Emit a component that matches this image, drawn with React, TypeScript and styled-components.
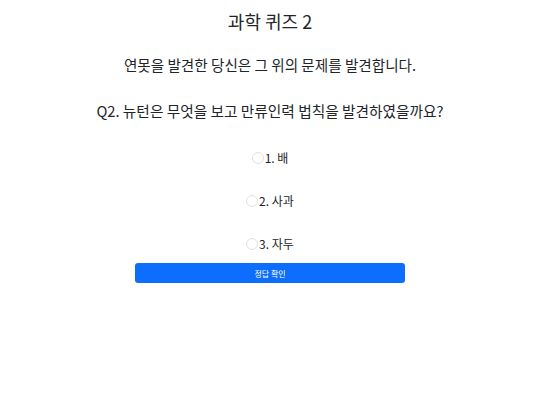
import styled, { createGlobalStyle } from "styled-components";

const GlobalStyle = createGlobalStyle`
    body {
        margin: 0;
        background: #fff;
        color: #212529;
        font-family: "Noto Sans CJK KR", "Noto Sans", sans-serif;
    }
`;

const Wrapper = styled.div`
    display: flex;
    flex-direction: column;
    align-items: center;
    padding-top: 8px;
`;

const Title = styled.h1`
    margin: 0;
    font-size: 18px;
    font-weight: 400;
    line-height: 26px;
`;

const Story = styled.p`
    margin: 20px 0 0;
    font-size: 14.6px;
    line-height: 22px;
`;

const Question = styled.h2`
    margin: 24px 0 0;
    font-size: 14.7px;
    font-weight: 400;
    line-height: 22px;
`;

const Options = styled.div`
    display: flex;
    flex-direction: column;
    align-items: center;
    gap: 23px;
    margin-top: 26px;
`;

const OptionLabel = styled.label`
    display: flex;
    align-items: center;
    font-size: 12px;
    line-height: 20px;
`;

const Radio = styled.input`
    appearance: none;
    width: 12px;
    height: 12px;
    margin: 0 1px 0 0;
    border: 1px solid #dee2e6;
    border-radius: 50%;
    background: #fff;
`;

const SubmitButton = styled.button`
    width: 270px;
    height: 20px;
    margin-top: 9px;
    border: none;
    border-radius: 3px;
    background: #0d6efd;
    color: #fff;
    font-family: inherit;
    font-size: 8px;
    padding: 0;
`;

const answers = ["1. 배", "2. 사과", "3. 자두"];

function App() {
    return (
        <Wrapper>
            <GlobalStyle />
            <Title>과학 퀴즈 2</Title>
            <Story>연못을 발견한 당신은 그 위의 문제를 발견합니다.</Story>
            <Question>Q2. 뉴턴은 무엇을 보고 만류인력 법칙을 발견하였을까요?</Question>
            <Options>
                {answers.map((a) => (
                    <OptionLabel key={a}>
                        <Radio type="radio" name="answer" />
                        {a}
                    </OptionLabel>
                ))}
            </Options>
            <SubmitButton>정답 확인</SubmitButton>
        </Wrapper>
    );
}

export default App;
